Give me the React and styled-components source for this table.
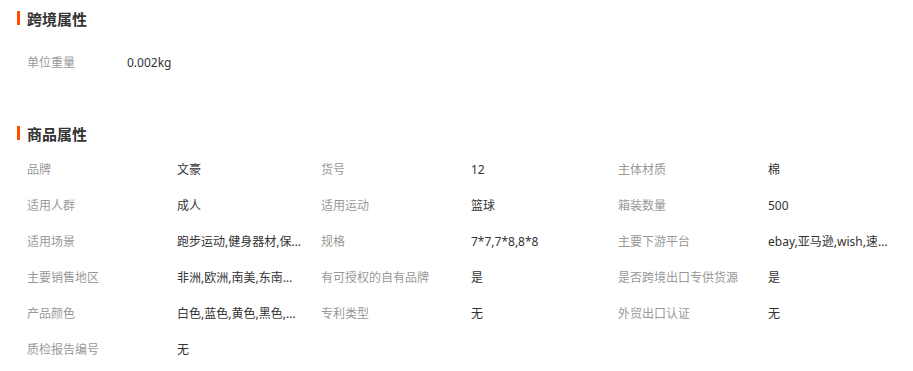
import React from 'react';
import styled, { createGlobalStyle } from 'styled-components';

const GlobalStyle = createGlobalStyle`
  body {
    margin: 0;
    background: #ffffff;
    font-family: "Noto Sans", "Noto Sans CJK SC", sans-serif;
  }
`;

const crossBorder = [{ label: '单位重量', value: '0.002kg' }];

const goods = [
  { label: '品牌', value: '文豪' },
  { label: '货号', value: '12' },
  { label: '主体材质', value: '棉' },
  { label: '适用人群', value: '成人' },
  { label: '适用运动', value: '篮球' },
  { label: '箱装数量', value: '500' },
  { label: '适用场景', value: '跑步运动,健身器材,保健器材' },
  { label: '规格', value: '7*7,7*8,8*8' },
  { label: '主要下游平台', value: 'ebay,亚马逊,wish,速卖通' },
  { label: '主要销售地区', value: '非洲,欧洲,南美,东南亚,北美' },
  { label: '有可授权的自有品牌', value: '是' },
  { label: '是否跨境出口专供货源', value: '是' },
  { label: '产品颜色', value: '白色,蓝色,黄色,黑色,红色' },
  { label: '专利类型', value: '无' },
  { label: '外贸出口认证', value: '无' },
  { label: '质检报告编号', value: '无' },
];

function AttrSection({ title, items, first }) {
  return (
    <Section $first={first}>
      <SectionTitle>
        <Bar />
        {title}
      </SectionTitle>
      <AttrGrid $first={first}>
        {items.map((item) => (
          <AttrCell key={item.label}>
            <AttrLabel $width={first ? 100 : 150}>{item.label}</AttrLabel>
            <AttrValue>{item.value}</AttrValue>
          </AttrCell>
        ))}
      </AttrGrid>
    </Section>
  );
}

function App() {
  return (
    <Page>
      <GlobalStyle />
      <AttrSection title="跨境属性" items={crossBorder} first />
      <AttrSection title="商品属性" items={goods} />
    </Page>
  );
}

const Page = styled.div`
  width: 913px;
  background: #ffffff;
`;

const Section = styled.section`
  margin-bottom: ${(p) => (p.$first ? '27px' : '0')};
`;

const SectionTitle = styled.h3`
  display: flex;
  align-items: center;
  gap: 7px;
  height: 36px;
  margin: 0;
  padding-left: 17px;
  font-size: 15px;
  font-weight: 700;
  color: #333333;
`;

const Bar = styled.span`
  display: block;
  width: 3px;
  height: 14px;
  background: #ff4e00;
`;

const AttrGrid = styled.div`
  display: grid;
  grid-template-columns: 294px 297px 297px;
  grid-auto-rows: 36px;
  padding: ${(p) => (p.$first ? '8px 0 8px 27px' : '0 0 0 27px')};
`;

const AttrCell = styled.div`
  display: flex;
  align-items: center;
  font-size: 12px;
`;

const AttrLabel = styled.span`
  flex: 0 0 ${(p) => p.$width}px;
  color: #999999;
  white-space: nowrap;
`;

const AttrValue = styled.span`
  width: 126px;
  color: #333333;
  white-space: nowrap;
  overflow: hidden;
  text-overflow: ellipsis;
`;

export default App;
